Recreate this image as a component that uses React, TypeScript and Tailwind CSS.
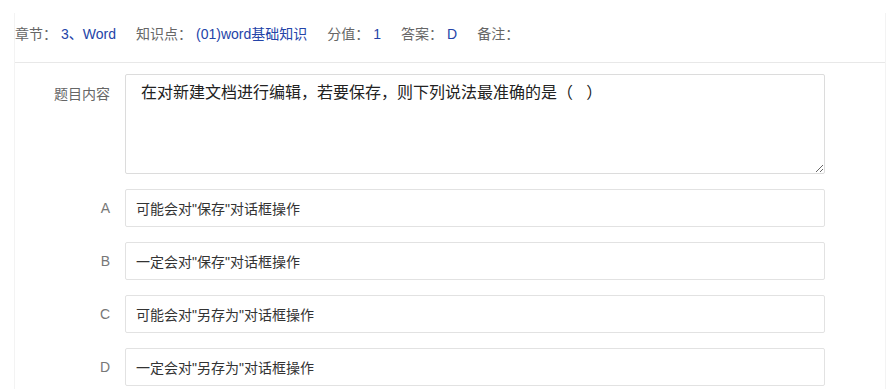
const meta = [
  { label: "章节：", value: "3、Word" },
  { label: "知识点：", value: "(01)word基础知识" },
  { label: "分值：", value: "1" },
  { label: "答案：", value: "D" },
  { label: "备注：", value: "" },
];

const options = [
  { key: "A", text: '可能会对"保存"对话框操作' },
  { key: "B", text: '一定会对"保存"对话框操作' },
  { key: "C", text: '可能会对"另存为"对话框操作' },
  { key: "D", text: '一定会对"另存为"对话框操作' },
];

export default function App() {
  return (
    <div
      className="min-h-screen w-[896px] bg-white pt-[13px]"
      style={{ fontFamily: '"Liberation Sans", "Noto Sans CJK SC", sans-serif' }}
    >
      <div className="ml-[14px] w-[872px] border-x border-[#f3f3f3] min-h-[376px]">
        {/* header info bar */}
        <div className="flex h-[50px] items-start border-b border-[#e8e8e8] pt-[11px] text-[14px] leading-[20px]">
          {meta.map((m) => (
            <div key={m.label} className="mr-[20px] flex gap-[4px]">
              <span className="text-[#666]">{m.label}</span>
              <span className="text-[#2444a8]">{m.value}</span>
            </div>
          ))}
        </div>

        {/* question body */}
        <div className="pt-[11px]">
          <div className="flex">
            <div className="w-[110px] shrink-0 pr-[15px] pt-[10px] text-right text-[14px] leading-[20px] text-[#666]">
              题目内容
            </div>
            <textarea
              readOnly
              defaultValue="在对新建文档进行编辑，若要保存，则下列说法最准确的是（   ）"
              className="h-[100px] w-[700px] rounded-[2px] border border-[#dcdcdc] px-[15px] pt-[6px] text-[16px] leading-[24px] text-[#222] outline-none"
            />
          </div>

          {options.map((o) => (
            <div key={o.key} className="mt-[15px] flex items-center">
              <div className="w-[110px] shrink-0 pr-[15px] text-right text-[14px] leading-[20px] text-[#777]">
                {o.key}
              </div>
              <input
                readOnly
                defaultValue={o.text}
                className="h-[38px] w-[700px] rounded-[2px] border border-[#e2e2e2] px-[10px] text-[14px] text-[#333] outline-none"
              />
            </div>
          ))}
        </div>
      </div>
    </div>
  );
}
